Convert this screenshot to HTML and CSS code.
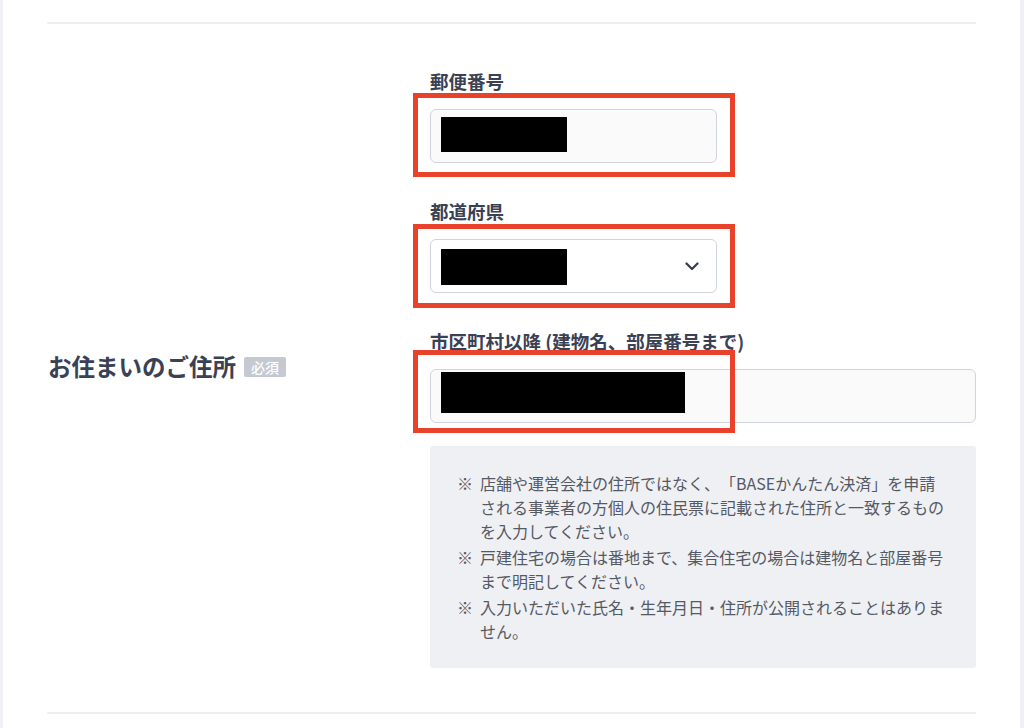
FILE: index.html
```html
<!DOCTYPE html>
<html lang="ja">
<head>
    <meta charset="UTF-8">
    <meta name="viewport" content="width=device-width, initial-scale=1.0">
    <title>お住まいのご住所</title>
    <link rel="stylesheet" href="styles.css">
</head>
<body>
  <div class="panel">
    <section class="row">
      <div class="row-label">
        <span class="row-title">お住まいのご住所</span>
        <span class="required">必須</span>
      </div>

      <div class="row-fields">
        <div class="field">
          <label class="field-label">郵便番号</label>
          <div class="input input-zip">
            <span class="redact redact-zip"></span>
            <span class="mark mark-zip"></span>
          </div>
        </div>

        <div class="field">
          <label class="field-label">都道府県</label>
          <div class="input select">
            <span class="redact redact-pref"></span>
            <svg class="chevron" width="14" height="9" viewBox="0 0 14 9">
              <path d="M1.5 1.5 L7 7 L12.5 1.5" fill="none" stroke="#343b4d" stroke-width="2.2" stroke-linecap="round" stroke-linejoin="round"/>
            </svg>
            <span class="mark mark-pref"></span>
          </div>
        </div>

        <div class="field">
          <label class="field-label">市区町村以降 (建物名、部屋番号まで)</label>
          <div class="input">
            <span class="redact redact-addr"></span>
            <span class="mark mark-addr"></span>
          </div>
        </div>

        <ul class="note">
          <li>店舗や運営会社の住所ではなく、「BASEかんたん決済」を申請<br>される事業者の方個人の住民票に記載された住所と一致するもの<br>を入力してください。</li>
          <li>戸建住宅の場合は番地まで、集合住宅の場合は建物名と部屋番号<br>まで明記してください。</li>
          <li>入力いただいた氏名・生年月日・住所が公開されることはありま<br>せん。</li>
        </ul>
      </div>
    </section>
  </div>
</body>
</html>
```

FILE: styles.css
```css
body {
  margin: 0;
  background: #f0f0f6;
  font-family: "Noto Sans CJK JP", "Noto Sans", sans-serif;
  color: #3b4255;
}

.panel {
  background: #fff;
  margin: 0 4px 0 3px;
  padding: 22px 44px 16px;
  height: 728px;
  box-sizing: border-box;
}

.row {
  display: flex;
  align-items: center;
  border-top: 2px solid #eef0f3;
  border-bottom: 2px solid #eef0f3;
  padding: 44px 0 44px 1px;
}

.row-label {
  display: flex;
  align-items: center;
  width: 382px;
  flex-shrink: 0;
  margin-top: -4px;
}

.row-title {
  font-size: 23.5px;
  font-weight: 700;
  line-height: 30px;
  color: #3a4154;
}

.required {
  margin-left: 8px;
  background: #c5c9d2;
  color: #fff;
  font-size: 14px;
  font-weight: 500;
  line-height: 20px;
  padding: 0 7px;
  border-radius: 2px;
  margin-top: 2px;
}

.row-fields {
  flex: 1;
}

.field {
  margin-bottom: 35px;
}

.field:last-of-type {
  margin-bottom: 23px;
}

.field-label {
  display: block;
  font-size: 18.5px;
  font-weight: 700;
  line-height: 26px;
  margin-bottom: 15px;
  color: #3a4154;
}

.input {
  position: relative;
  height: 54px;
  box-sizing: border-box;
  border: 1px solid #d0d4dc;
  border-radius: 6px;
  background: #fafafb;
  padding: 0 10px;
  display: flex;
  align-items: flex-start;
}

.input-zip {
  width: 287px;
}

.select {
  width: 287px;
  background: #fff;
  align-items: center;
  justify-content: space-between;
  padding-right: 17px;
}

.redact {
  display: block;
  background: #000;
}

.redact-zip {
  width: 126px;
  height: 35px;
  margin-top: 7px;
}

.redact-pref {
  width: 126px;
  height: 36px;
  margin-top: 1px;
}

.redact-addr {
  width: 244px;
  height: 41px;
  margin-top: 2px;
}

.chevron {
  display: block;
}

/* red annotation frames drawn over the inputs */
.mark {
  position: absolute;
  left: -18px;
  width: 322px;
  box-sizing: border-box;
  border: 5px solid #e8412c;
}

.mark-zip {
  top: -17px;
  height: 84px;
}

.mark-pref {
  top: -16px;
  height: 84px;
}

.mark-addr {
  top: -20px;
  height: 83px;
}

.note {
  list-style: none;
  margin: 0;
  background: #eff0f4;
  border-radius: 3px;
  padding: 25px 8px 25px 28px;
  font-size: 16px;
  line-height: 24px;
  color: #555963;
  text-spacing-trim: space-all;
  white-space: nowrap;
}

.note li {
  position: relative;
  padding-left: 22px;
  margin-bottom: 2px;
}

.note li:last-child {
  margin-bottom: 0;
}

.note li::before {
  content: "※";
  position: absolute;
  left: -1px;
  top: 0;
  font-weight: 700;
}
```
